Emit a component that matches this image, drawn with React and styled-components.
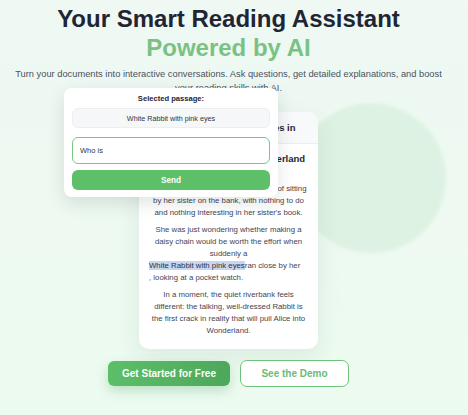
import React from "react";
import styled, { createGlobalStyle } from "styled-components";

const GlobalStyle = createGlobalStyle`
  html, body {
    margin: 0;
    padding: 0;
  }
  body {
    font-family: "Liberation Sans", Arial, sans-serif;
    background: #eef8f2;
  }
`;

const Page = styled.div`
  position: relative;
  min-height: 415px;
  overflow: hidden;
  padding: 4px 11px 0 0;
  box-sizing: border-box;
  display: flex;
  flex-direction: column;
  align-items: center;
  background: linear-gradient(180deg, #eff8f3 0%, #edf9f1 60%, #ecfbf0 100%);
`;

const Blob = styled.div`
  position: absolute;
  left: 296px;
  top: 103px;
  width: 150px;
  height: 150px;
  border-radius: 50%;
  background: #ddf2e2;
  filter: blur(1.5px);
`;

const Title = styled.h1`
  position: relative;
  margin: 0;
  font-size: 24px;
  line-height: 29px;
  font-weight: 700;
  color: #1f2533;
  text-align: center;
`;

const Accent = styled.span`
  display: block;
  color: #79c284;
`;

const Lead = styled.p`
  position: relative;
  margin: 5px 0 0;
  width: 430px;
  font-size: 9.3px;
  line-height: 14px;
  color: #4a5160;
  text-align: center;
`;

const Demo = styled.div`
  position: relative;
  margin-top: 17px;
  width: 179px;
`;

const Card = styled.div`
  background: #fff;
  border-radius: 10px;
  box-shadow: 0 8px 24px rgba(40, 80, 55, 0.09);
  overflow: hidden;
`;

const CardHead = styled.div`
  height: 31px;
  display: flex;
  align-items: center;
  justify-content: center;
  background: #f8f9fb;
  border-bottom: 1px solid #eceef2;
  font-size: 9.5px;
  font-weight: 700;
  color: #1f2533;
  white-space: nowrap;
`;

const CardBody = styled.div`
  padding: 8px 10px 12px;
  text-align: center;
  color: #3f4552;
`;

const BookTitle = styled.h2`
  margin: 0;
  font-size: 9.5px;
  line-height: 13px;
  font-weight: 700;
  color: #1f2533;
`;

const Chapter = styled.div`
  margin-top: 6px;
  font-size: 7.5px;
  line-height: 12px;
  color: #8a909b;
`;

const Para = styled.p`
  margin: ${(p) => (p.$first ? "0" : "5px")} 0 0;
  font-size: 7.8px;
  line-height: 12px;
`;

const Flow = styled.span`
  display: block;
  text-align: left;
`;

const Mark = styled.span`
  background: #c8d7f1;
  color: #2c3340;
`;

const Popup = styled.div`
  position: absolute;
  left: -75px;
  top: -24px;
  width: 214px;
  box-sizing: border-box;
  padding: 5px 8px 7px;
  background: #fff;
  border-radius: 8px;
  box-shadow: 0 6px 18px rgba(20, 40, 30, 0.13);
  display: flex;
  flex-direction: column;
`;

const PopupLabel = styled.div`
  font-size: 7.6px;
  line-height: 12px;
  font-weight: 700;
  color: #1f2533;
  text-align: center;
`;

const Passage = styled.div`
  margin-top: 3px;
  height: 20px;
  box-sizing: border-box;
  display: flex;
  align-items: center;
  justify-content: center;
  background: #f6f7f9;
  border: 1px solid #eceef2;
  border-radius: 6px;
  font-size: 7.2px;
  color: #2f3540;
`;

const Input = styled.input`
  margin-top: 9px;
  height: 27px;
  box-sizing: border-box;
  padding: 0 7px;
  border: 1.5px solid #7cc685;
  border-radius: 6px;
  outline: none;
  font-family: inherit;
  font-size: 7.5px;
  color: #2f3540;
  background: #fff;
`;

const SendButton = styled.button`
  margin-top: 6px;
  height: 20px;
  border: none;
  border-radius: 6px;
  background: #5dbf68;
  color: #fff;
  font-family: inherit;
  font-size: 8.2px;
  font-weight: 700;
  cursor: pointer;
`;

const Actions = styled.div`
  position: relative;
  margin-top: 11px;
  display: flex;
  align-items: center;
  gap: 10px;
`;

const CtaButton = styled.button`
  box-sizing: border-box;
  height: ${(p) => (p.$outline ? "27px" : "25px")};
  width: ${(p) => (p.$outline ? "109px" : "122px")};
  border-radius: ${(p) => (p.$outline ? "7px" : "6px")};
  border: ${(p) => (p.$outline ? "1.5px solid #6fc279" : "none")};
  background: ${(p) =>
    p.$outline ? "#fff" : "linear-gradient(90deg, #5cbf68 0%, #4da75c 100%)"};
  color: ${(p) => (p.$outline ? "#6bbb76" : "#fff")};
  box-shadow: ${(p) =>
    p.$outline ? "none" : "0 5px 12px rgba(70, 160, 90, 0.28)"};
  font-family: inherit;
  font-size: 10px;
  font-weight: 700;
  cursor: pointer;
`;

export default function App() {
  return (
    <>
      <GlobalStyle />
      <Page>
        <Blob />
        <Title>
          Your Smart Reading Assistant
          <Accent>Powered by AI</Accent>
        </Title>
        <Lead>
          Turn your documents into interactive conversations. Ask questions,
          get detailed explanations, and boost your reading skills with AI.
        </Lead>

        <Demo>
          <Card>
            <CardHead>Try selecting any passages in</CardHead>
            <CardBody>
              <BookTitle>Alice's Adventures in Wonderland</BookTitle>
              <Chapter>Chapter 1</Chapter>
              <Para $first>
                Alice was beginning to get very tired of sitting by her sister
                on the bank, with nothing to do and nothing interesting in her
                sister's book.
              </Para>
              <Para>
                She was just wondering whether making a daisy chain would be
                worth the effort when suddenly a
                <Flow>
                  <Mark>White Rabbit with pink eyes</Mark>ran close by her
                  <br />, looking at a pocket watch.
                </Flow>
              </Para>
              <Para>
                In a moment, the quiet riverbank feels different: the talking,
                well-dressed Rabbit is the first crack in reality that will
                pull Alice into Wonderland.
              </Para>
            </CardBody>
          </Card>

          <Popup>
            <PopupLabel>Selected passage:</PopupLabel>
            <Passage>White Rabbit with pink eyes</Passage>
            <Input defaultValue="Who is" />
            <SendButton>Send</SendButton>
          </Popup>
        </Demo>

        <Actions>
          <CtaButton>Get Started for Free</CtaButton>
          <CtaButton $outline>See the Demo</CtaButton>
        </Actions>
      </Page>
    </>
  );
}
